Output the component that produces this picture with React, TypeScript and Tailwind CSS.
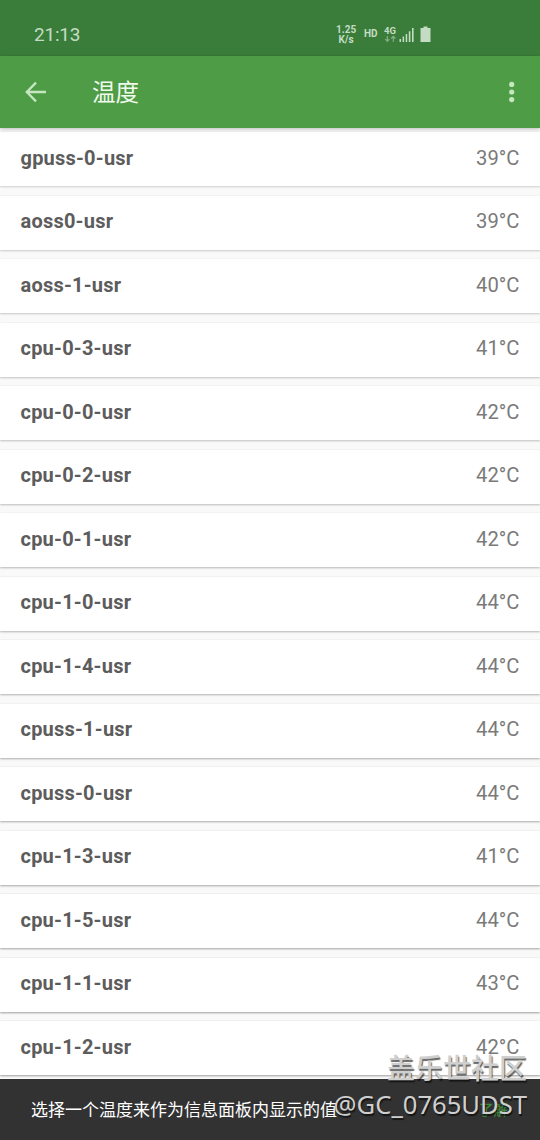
interface Sensor {
  name: string;
  value: number;
}

const SENSORS: Sensor[] = [
  { name: "gpuss-0-usr", value: 39 },
  { name: "aoss0-usr", value: 39 },
  { name: "aoss-1-usr", value: 40 },
  { name: "cpu-0-3-usr", value: 41 },
  { name: "cpu-0-0-usr", value: 42 },
  { name: "cpu-0-2-usr", value: 42 },
  { name: "cpu-0-1-usr", value: 42 },
  { name: "cpu-1-0-usr", value: 44 },
  { name: "cpu-1-4-usr", value: 44 },
  { name: "cpuss-1-usr", value: 44 },
  { name: "cpuss-0-usr", value: 44 },
  { name: "cpu-1-3-usr", value: 41 },
  { name: "cpu-1-5-usr", value: 44 },
  { name: "cpu-1-1-usr", value: 43 },
  { name: "cpu-1-2-usr", value: 42 },
];

function StatusBar() {
  return (
    <div className="flex h-14 shrink-0 items-start bg-[#3a7d3a] pl-[34px] text-[#c4dcc4]">
      <span className="mt-[24px] w-[302px] text-[19px] leading-[22px] tracking-[-0.2px]">21:13</span>
      <div className="mt-[25px] w-5 text-center text-[10px] font-bold leading-[9.5px]">
        <div>1.25</div>
        <div>K/s</div>
      </div>
      <span className="ml-[8px] mt-[28px] w-[15px] text-[10px] font-bold leading-[12px]">HD</span>
      <svg className="ml-[5px] mt-[26px] h-4 w-12" viewBox="0 0 48 16" fill="currentColor">
        <text x="0" y="8" fontSize="9.5" fontWeight="700">
          4G
        </text>
        <path
          d="M3.3 10v5.5M1.2 13.1l2.1 2.2 2.1-2.2M9.3 15.8v-5.5M7.2 12.5l2.1-2.2 2.1 2.2"
          fill="none"
          stroke="currentColor"
          strokeWidth="1.2"
          opacity="0.55"
        />
        <path d="M15.5 13H17v3h-1.5zM18.6 10.500h1.500V16h-1.500zM21.700 8h1.500v8h-1.500zM24.800 5.200h1.600V16h-1.600zM28 2h1.600v14H28z" />
        <path d="M39.500 .5h4V2h3v14h-10V2h3z" />
      </svg>
    </div>
  );
}

function Toolbar() {
  return (
    <header className="relative z-10 flex h-[71.5px] shrink-0 items-center bg-[#4f9c46] px-[24px] shadow-[0_1px_4px_rgba(0,0,0,0.25)]">
      <svg className="h-6 w-6" viewBox="0 0 24 24" fill="none" stroke="#c6e6c1" strokeWidth="2.3">
        <path d="M22 12H3.5M12 2.6L2.8 12l9.2 9.4" />
      </svg>
      <h1 className="ml-[44px] mt-[3px] flex-1 text-[23.5px] leading-8 text-[#f0fbed]">温度</h1>
      <svg className="h-6 w-2" viewBox="0 0 8 24" fill="#c3e8bd">
        <circle cx="3.7" cy="4.4" r="2.6" />
        <circle cx="3.7" cy="12" r="2.6" />
        <circle cx="3.7" cy="19.6" r="2.6" />
      </svg>
    </header>
  );
}

function SensorCard({ sensor, depth }: { sensor: Sensor; depth: number }) {
  // cards further down the screen cast a slightly stronger shadow
  const alpha = 0.17 + depth * 0.014;
  return (
    <li
      className="flex h-[54px] shrink-0 items-center justify-between bg-white pb-[3px] pl-[20.5px] pr-[20.5px] text-[20px]"
      style={{ boxShadow: `0 1px 2px rgba(0,0,0,${alpha}), 0 0 1px rgba(0,0,0,0.08)` }}
    >
      <span className="font-bold tracking-[0.22px] text-[#5c5c5c]">{sensor.name}</span>
      <span className="pt-px text-[20.2px] text-[#7a7a7a]">{sensor.value}°C</span>
    </li>
  );
}

function Snackbar() {
  return (
    <div className="absolute inset-x-0 bottom-0 flex h-[61px] items-center justify-between bg-[#323232] pl-[31px] pr-[32px] pt-[2px] text-[17px] text-white">
      <span>选择一个温度来作为信息面板内显示的值</span>
      <span className="text-[14.5px] font-medium text-[#3d8b3b]">了解</span>
    </div>
  );
}

function Watermark() {
  return (
    <div className="absolute bottom-[17px] right-[13px] flex flex-col items-end whitespace-nowrap text-[#cfcfcf] [text-shadow:1px_2px_1px_rgba(0,0,0,0.6)]">
      <span className="text-[28px] font-medium leading-[34px]">盖乐世社区</span>
      <span className="font-['Noto_Sans','Noto_Sans_CJK_SC',sans-serif] text-[25.6px] leading-[36px]">
        @GC_0765UDST
      </span>
    </div>
  );
}

export default function App() {
  return (
    <div className="relative flex h-[1140px] w-[540px] flex-col overflow-hidden bg-[#f9f9f9] font-['Roboto','Noto_Sans_CJK_SC',sans-serif]">
      <StatusBar />
      <Toolbar />
      <ul className="flex flex-col gap-[9.5px] pt-[4.5px]">
        {SENSORS.map((s, i) => (
          <SensorCard key={s.name} sensor={s} depth={i} />
        ))}
      </ul>
      <Snackbar />
      <Watermark />
    </div>
  );
}
